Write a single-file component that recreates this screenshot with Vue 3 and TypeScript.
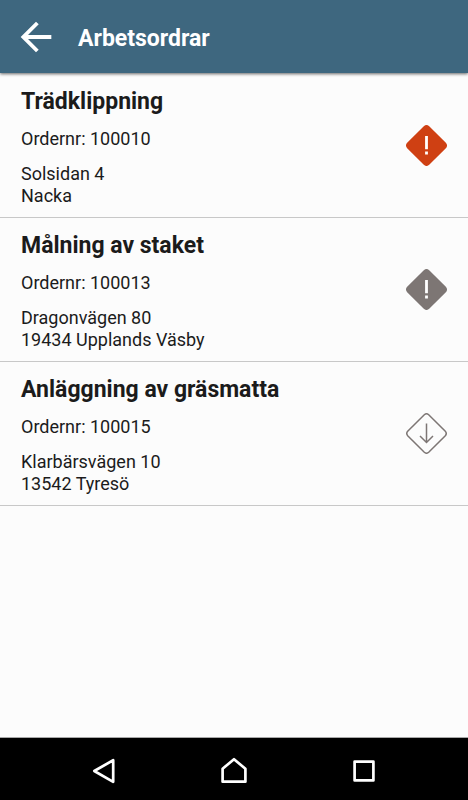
<script setup lang="ts">
type Status = 'urgent' | 'notice' | 'download'

interface WorkOrder {
  title: string
  number: string
  street: string
  city: string
  status: Status
}

interface NavItem {
  label: string
  path: string
}

const orders: WorkOrder[] = [
  { title: 'Trädklippning', number: '100010', street: 'Solsidan 4', city: 'Nacka', status: 'urgent' },
  { title: 'Målning av staket', number: '100013', street: 'Dragonvägen 80', city: '19434 Upplands Väsby', status: 'notice' },
  { title: 'Anläggning av gräsmatta', number: '100015', street: 'Klarbärsvägen 10', city: '13542 Tyresö', status: 'download' },
]

const navItems: NavItem[] = [
  { label: 'Bakåt', path: 'M6.3 16L25.2 5.2V26.8Z' },
  { label: 'Hem', path: 'M4.6 26.7V13.8L16 4.2L27.4 13.8V26.7Z' },
  { label: 'Senaste appar', path: 'M6.6 6.6H25.4V25.4H6.6Z' },
]
</script>

<template>
  <div class="screen">
    <header class="app-bar">
      <button class="icon-button" type="button" aria-label="Tillbaka">
        <svg class="back-icon" viewBox="0 0 24 24" aria-hidden="true">
          <path d="M20 11H7.83l5.59-5.59L12 4l-8 8 8 8 1.41-1.41L7.83 13H20v-2z" />
        </svg>
      </button>
      <h1 class="app-title">Arbetsordrar</h1>
    </header>

    <main class="content">
      <ul class="orders">
        <li v-for="order in orders" :key="order.number" class="order">
          <div class="details">
            <h2 class="order-title">{{ order.title }}</h2>
            <p class="order-number">Ordernr: {{ order.number }}</p>
            <p class="address">{{ order.street }}<br />{{ order.city }}</p>
          </div>
          <svg class="status" :class="order.status" viewBox="-0.5 -0.5 42 42" aria-hidden="true">
            <path class="diamond" d="M18.8 2.2Q21 .3 23.2 2.2L39.8 18.8Q41.7 21 39.8 23.2L23.2 39.8Q21 41.7 18.8 39.8L2.2 23.2Q.3 21 2.2 18.8Z" />
            <path v-if="order.status === 'download'" class="arrow" d="M21 11V30M14.5 23.5L21 30L27.5 23.5" />
            <path v-else class="mark" d="M19.6 11.5h2.8v13.2h-2.8zM19.6 27.1h2.8v2.9h-2.8z" />
          </svg>
        </li>
      </ul>
    </main>

    <nav class="nav-bar">
      <button v-for="item in navItems" :key="item.label" class="icon-button" type="button" :aria-label="item.label">
        <svg class="nav-icon" viewBox="0 0 32 32" aria-hidden="true"><path :d="item.path" /></svg>
      </button>
    </nav>
  </div>
</template>

<style>
body {
  margin: 0;
  background: #fcfcfc;
}
</style>

<style scoped>
.screen {
  display: flex;
  flex-direction: column;
  min-height: 100vh;
  background: #fcfcfc;
  color: #1b1b1b;
  font-family: Roboto, "Liberation Sans", sans-serif;
}

.app-bar {
  display: flex;
  align-items: center;
  gap: 19px;
  box-sizing: border-box;
  height: 73px;
  padding: 0 13px;
  background: #3e677f;
  color: #fff;
  box-shadow: 0 1px 3px rgba(0, 0, 0, 0.6);
}

.icon-button {
  display: flex;
  padding: 0;
  border: 0;
  background: none;
  color: inherit;
  cursor: pointer;
}

.back-icon {
  width: 46px;
  height: 46px;
  fill: currentColor;
}

.app-title {
  margin: 0;
  padding-top: 4px;
  font-size: 23px;
  font-weight: 700;
  line-height: 28px;
}

.content {
  flex: 1;
}

.orders {
  margin: 0;
  padding: 1px 0 0;
  list-style: none;
}

.order {
  display: flex;
  align-items: center;
  justify-content: space-between;
  box-sizing: border-box;
  min-height: 144px;
  padding: 12px 21px 9px;
  border-bottom: 1px solid #c8c8c8;
}

.order-title {
  margin: 0 0 11px;
  font-size: 23px;
  font-weight: 700;
  line-height: 30px;
}

.order-number {
  margin: 0 0 14px;
  font-size: 18px;
  line-height: 21px;
}

.address {
  margin: 0;
  font-size: 18px;
  line-height: 22px;
}

.status {
  flex: none;
  width: 42px;
  height: 42px;
  margin-bottom: 5px;
}

.diamond {
  stroke-width: 1.5;
}

.urgent .diamond {
  fill: #cf4013;
  stroke: #cf4013;
}

.notice .diamond {
  fill: #7d7674;
  stroke: #7d7674;
}

.mark {
  fill: #fff;
}

.download path {
  fill: none;
  stroke: #7d7674;
  stroke-width: 1.5;
}

.nav-bar {
  display: flex;
  align-items: center;
  justify-content: center;
  gap: 98px;
  box-sizing: border-box;
  height: 63px;
  border-top: 1px solid #a8a8a8;
  padding-top: 3px;
  background: #000;
  color: #fff;
}

.nav-icon {
  width: 32px;
  height: 32px;
  fill: none;
  stroke: currentColor;
  stroke-width: 2.7;
  stroke-linejoin: round;
}
</style>
